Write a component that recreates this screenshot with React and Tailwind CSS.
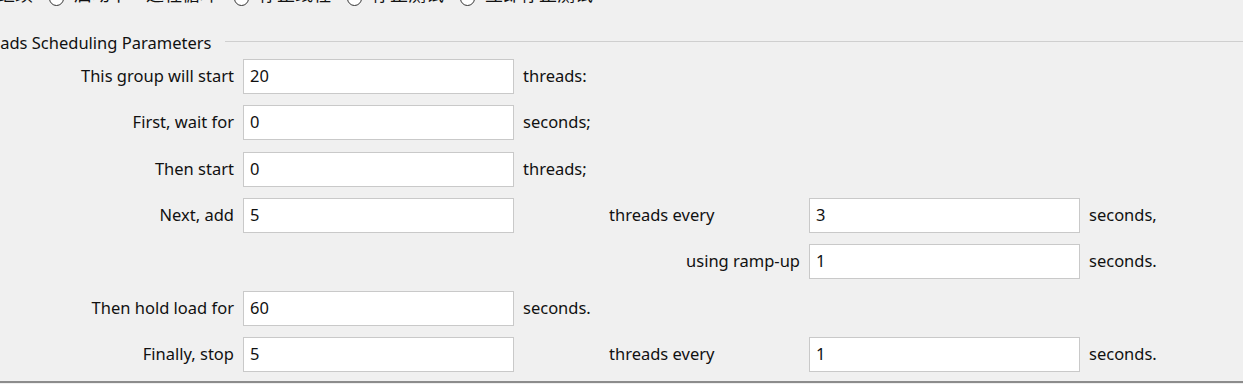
import React from 'react';

const FONT = { fontFamily: '"Noto Sans", "Noto Sans CJK SC", sans-serif' };

const ACTIONS = ['启动下一进程循环', '停止线程', '停止测试', '立即停止测试'];

// Each row: label, first value, middle text, second value, trailing text
const ROWS = [
  { label: 'This group will start', value: '20', after: 'threads:' },
  { label: 'First, wait for', value: '0', after: 'seconds;' },
  { label: 'Then start', value: '0', after: 'threads;' },
  { label: 'Next, add', value: '5', mid: 'threads every', value2: '3', after2: 'seconds,' },
  { rampUp: true, mid: 'using ramp-up', value2: '1', after2: 'seconds.' },
  { label: 'Then hold load for', value: '60', after: 'seconds.' },
  { label: 'Finally, stop', value: '5', mid: 'threads every', value2: '1', after2: 'seconds.' }
];

function Field({ value }) {
  return (
    <div className="h-[35px] bg-white border border-[#c9c9c9] pl-[6px] flex items-center text-[#111]">
      {value}
    </div>
  );
}

function Radio() {
  return <span className="w-[15px] h-[15px] mt-[8px] rounded-full border border-[#333] bg-white shrink-0" />;
}

export default function App() {
  return (
    <div
      className="w-[1243px] h-[384px] bg-[#f0f0f0] overflow-hidden text-[16.5px] text-[#111] flex flex-col"
      style={FONT}
    >
      {/* error action radios, cut off at the top */}
      <div className="flex items-center h-[20px] mt-[-16px] ml-[-3px] text-[18px] leading-[20px] whitespace-nowrap">
        <span>继续</span>
        {ACTIONS.map((a) => (
          <div key={a} className="flex items-center ml-[16px]">
            <Radio />
            <span className="ml-[10px]">{a}</span>
          </div>
        ))}
      </div>

      {/* titled border */}
      <div className="flex items-center h-[24px] mt-[27px] whitespace-nowrap">
        <span className="ml-[-35px]">Threads Scheduling Parameters</span>
        <div className="flex-1 h-px bg-[#cfcfcf] ml-[14px] mt-[-3px]" />
      </div>

      <div className="grid grid-cols-[234px_271px_277px_271px_1fr] gap-x-[9px] gap-y-[11.33px] mt-[4px] auto-rows-[35px] items-center">
        {ROWS.map((r, i) => (
          <React.Fragment key={i}>
            <div className="text-right whitespace-nowrap">{r.label}</div>
            {r.rampUp ? <div /> : <Field value={r.value} />}
            {r.mid ? (
              <div className={r.rampUp ? 'text-right whitespace-nowrap' : 'pl-[86px] whitespace-nowrap'}>{r.mid}</div>
            ) : (
              <div className="whitespace-nowrap">{r.after}</div>
            )}
            {r.value2 ? <Field value={r.value2} /> : <div />}
            <div className="whitespace-nowrap">{r.after2}</div>
          </React.Fragment>
        ))}
      </div>

      <div className="mt-auto h-[2px] bg-[#8c8c8c] mb-px" />
    </div>
  );
}
